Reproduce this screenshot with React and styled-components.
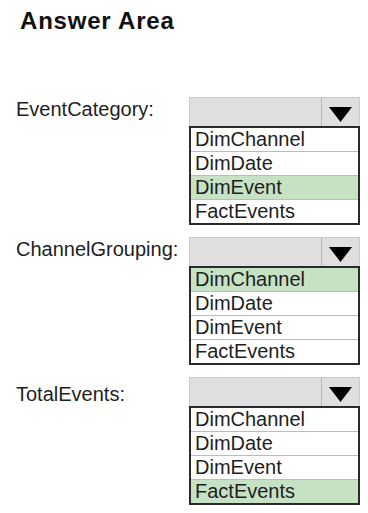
import React from "react";
import styled, { createGlobalStyle } from "styled-components";

const Global = createGlobalStyle`
  html, body { margin: 0; padding: 0; background: #ffffff; }
  body { font-family: "Liberation Sans", Arial, sans-serif; color: #1e1e1e; }
`;

const Page = styled.div`
  padding: 8px 0 0 16px;
  width: 368px;
  height: 513px;
  box-sizing: border-box;
`;

const Title = styled.h1`
  margin: 0 0 0 4px;
  font-size: 24px;
  line-height: 26px;
  font-weight: 700;
  letter-spacing: 0.8px;
  color: #111;
`;

const Form = styled.div`
  margin-top: 63px;
  display: flex;
  flex-direction: column;
  gap: 12px;
`;

const Row = styled.div`
  display: flex;
  align-items: flex-start;
`;

const Label = styled.div`
  width: 173px;
  padding-top: ${(p) => p.$offset}px;
  font-size: 20px;
  line-height: 24px;
  color: #1e1e1e;
`;

const Dropdown = styled.div`
  width: 171px;
  display: flex;
  flex-direction: column;
`;

const Header = styled.div`
  height: 29px;
  box-sizing: border-box;
  display: flex;
  background: #dfdfdf;
  border: 1px solid #cbcbcb;
  border-bottom: none;
`;

const Field = styled.div`
  flex: 1;
`;

const ArrowButton = styled.div`
  width: 38px;
  border-left: 1px solid #b5b5b5;
  display: flex;
  justify-content: center;
  align-items: flex-start;
  padding-top: 9px;
  box-sizing: border-box;
`;

const List = styled.div`
  border: 2px solid #2a2a2a;
  background: #fff;
`;

const Option = styled.div`
  height: 23px;
  line-height: 23px;
  padding: 0 4px;
  font-size: 20px;
  color: #1e1e1e;
  background: ${(p) => (p.$selected ? "#c6e1c4" : "#ffffff")};
  border-top: ${(p) => (p.$first ? "none" : "1px solid #bcbcbc")};
  white-space: nowrap;
`;

const Triangle = () => (
  <svg width="23" height="15" viewBox="0 0 23 15">
    <polygon points="0,0 23,0 11.5,15" fill="#000" />
  </svg>
);

const OPTIONS = ["DimChannel", "DimDate", "DimEvent", "FactEvents"];

const QUESTIONS = [
  { label: "EventCategory:", selected: "DimEvent", offset: 0 },
  { label: "ChannelGrouping:", selected: "DimChannel", offset: 0 },
  { label: "TotalEvents:", selected: "FactEvents", offset: 5 },
];

export default function App() {
  return (
    <Page>
      <Global />
      <Title>Answer Area</Title>
      <Form>
        {QUESTIONS.map((q) => (
          <Row key={q.label}>
            <Label $offset={q.offset}>{q.label}</Label>
            <Dropdown>
              <Header>
                <Field />
                <ArrowButton>
                  <Triangle />
                </ArrowButton>
              </Header>
              <List>
                {OPTIONS.map((o, i) => (
                  <Option key={o} $first={i === 0} $selected={o === q.selected}>
                    {o}
                  </Option>
                ))}
              </List>
            </Dropdown>
          </Row>
        ))}
      </Form>
    </Page>
  );
}
